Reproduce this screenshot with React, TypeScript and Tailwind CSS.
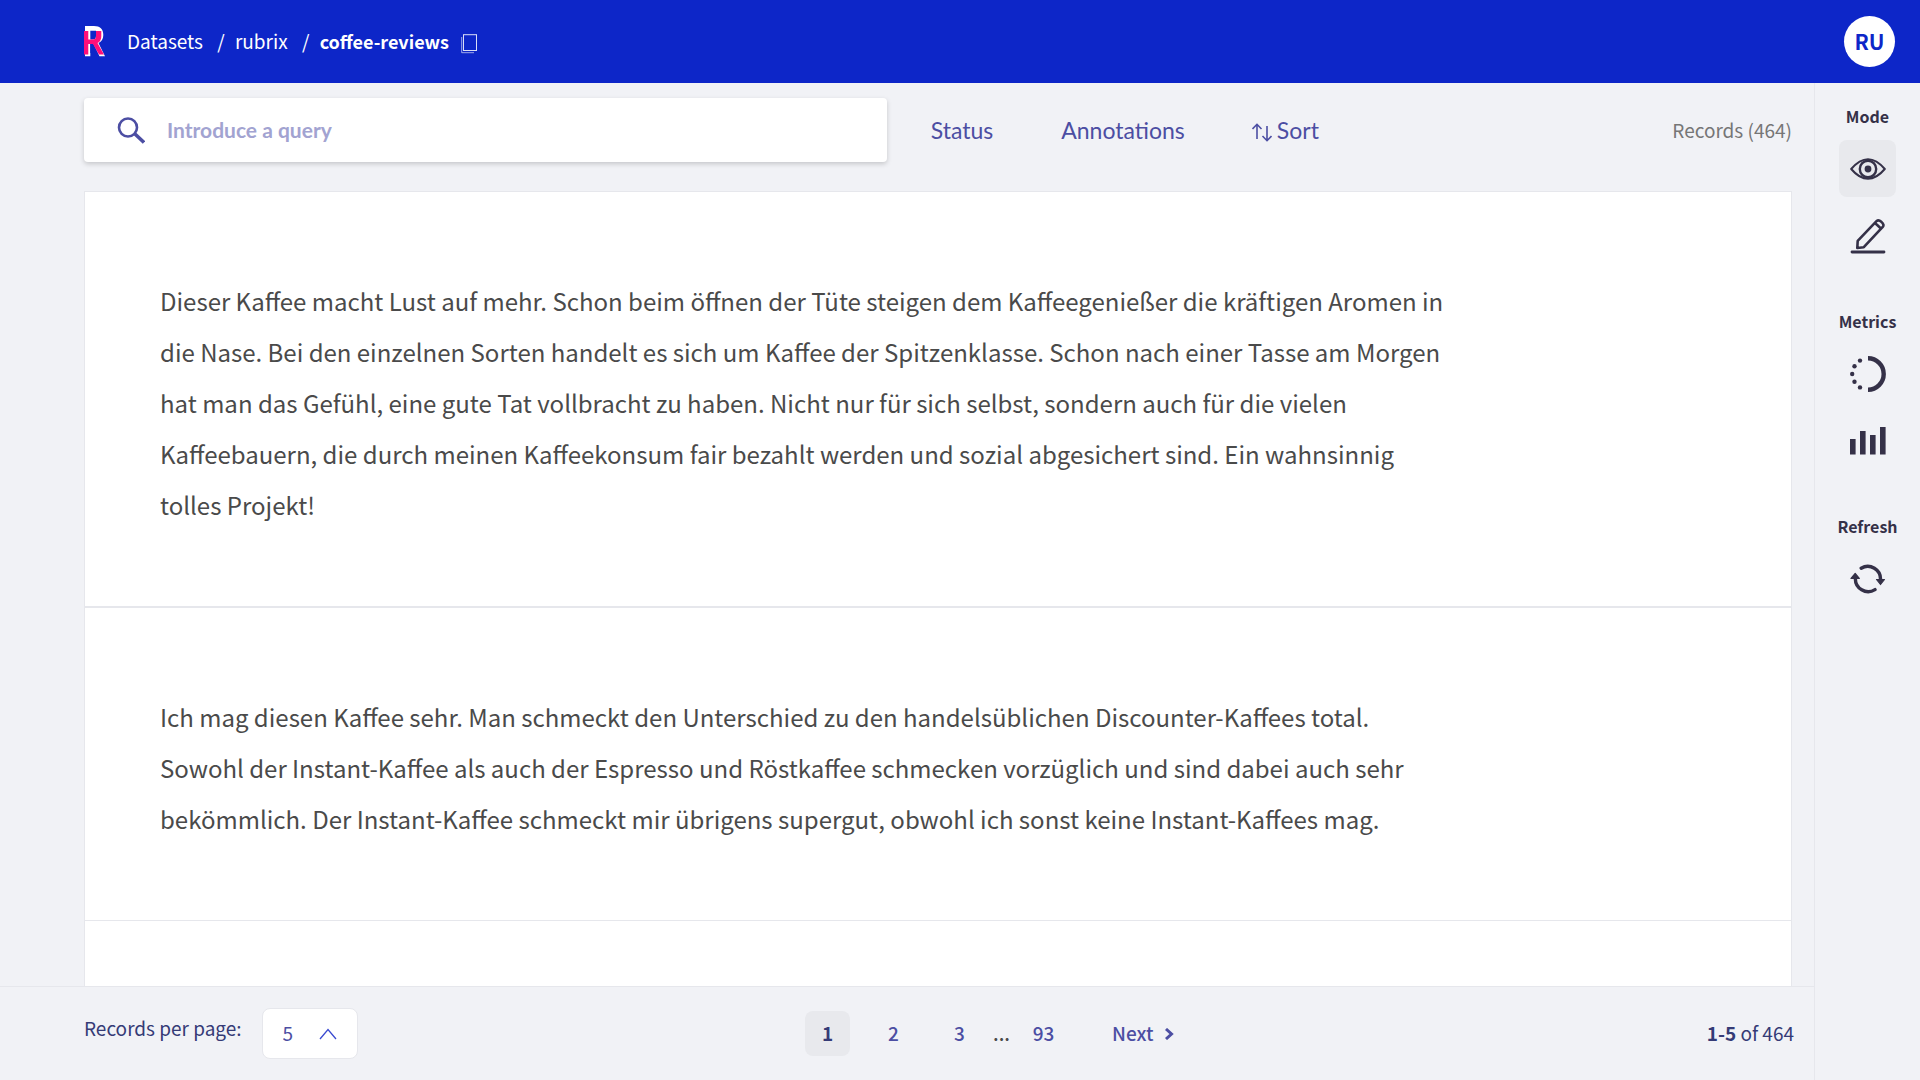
import { useState } from "react";
import type { ReactNode } from "react";

const records = [
  "Dieser Kaffee macht Lust auf mehr. Schon beim öffnen der Tüte steigen dem Kaffeegenießer die kräftigen Aromen in die Nase. Bei den einzelnen Sorten handelt es sich um Kaffee der Spitzenklasse. Schon nach einer Tasse am Morgen hat man das Gefühl, eine gute Tat vollbracht zu haben. Nicht nur für sich selbst, sondern auch für die vielen Kaffeebauern, die durch meinen Kaffeekonsum fair bezahlt werden und sozial abgesichert sind. Ein wahnsinnig tolles Projekt!",
  "Ich mag diesen Kaffee sehr. Man schmeckt den Unterschied zu den handelsüblichen Discounter-Kaffees total. Sowohl der Instant-Kaffee als auch der Espresso und Röstkaffee schmecken vorzüglich und sind dabei auch sehr bekömmlich. Der Instant-Kaffee schmeckt mir übrigens supergut, obwohl ich sonst keine Instant-Kaffees mag.",
];

function Logo() {
  return (
    <svg width="22" height="31" viewBox="0 0 22 31" fill="none" aria-hidden="true">
      <path d="M1 0H10C16 0 19.300 3 19.300 9C19.300 13 17.500 15.500 14.500 17L21 30.300H15.500L9.500 18H6.300V30.300H1Z" fill="#fff" />
      <path d="M6.300 4.700H12V10C12 12.500 11 13.500 8.500 13.500H6.300Z" fill="#0d26c8" />
      <path d="M9 18L13.500 27H6.300V18Z" fill="#0d26c8" />
      <path d="M0 5H4.300V13.500H8.500C11 13.500 12 12.500 12 10V5H17.300V10.500C17.300 13.500 16 15.800 13.500 17L20 28.500H15L9 18H4.300V28.500H0Z" fill="#ff0f79" />
    </svg>
  );
}

function EyeIcon() {
  return (
    <svg width="36" height="22" viewBox="0 0 36 22" fill="none" stroke="#353148" strokeWidth="2" aria-hidden="true">
      <path d="M1.200 11Q9.500 1.200 18 1.200T34.800 11Q26.500 20.800 18 20.800T1.200 11Z" strokeLinejoin="round" />
      <circle cx="18" cy="11" r="8.200" strokeWidth="2.400" />
      <circle cx="18" cy="11" r="3.400" fill="#353148" stroke="none" />
    </svg>
  );
}

function PencilIcon() {
  return (
    <svg width="36" height="36" viewBox="0 0 36 36" fill="none" stroke="#353148" strokeWidth="2.600" aria-hidden="true">
      <path d="M7.300 30L7.700 22.800L26.500 3.200Q28.500 1.200 31 3.500Q35 6.800 32.500 9.200L13.800 29.200Z" strokeLinejoin="round" />
      <path d="M25 5L31.500 11" />
      <path d="M2 34H34" strokeWidth="2.800" strokeLinecap="round" />
    </svg>
  );
}

function ProgressIcon() {
  return (
    <svg width="36" height="36" viewBox="0 0 36 36" fill="none" aria-hidden="true">
      <path d="M18 2.300A15.700 15.700 0 0 1 18 33.700" stroke="#353148" strokeWidth="4.400" />
      <g fill="#353148">
        <circle cx="10" cy="4.600" r="2.200" />
        <circle cx="4.500" cy="10.200" r="2.200" />
        <circle cx="2.200" cy="18" r="2.200" />
        <circle cx="4.500" cy="25.800" r="2.200" />
        <circle cx="10" cy="31.400" r="2.200" />
      </g>
    </svg>
  );
}

function BarsIcon() {
  return (
    <svg width="36" height="28" viewBox="0 0 36 28" fill="#353148" aria-hidden="true">
      <rect x="0" y="12" width="5.600" height="15.500" />
      <rect x="10" y="4" width="5.600" height="23.500" />
      <rect x="20" y="8" width="5.600" height="19.500" />
      <rect x="30" y="0" width="5.600" height="27.500" />
    </svg>
  );
}

function RefreshIcon() {
  return (
    <svg width="36" height="30" viewBox="0 0 36 30" fill="none" stroke="#353148" strokeWidth="3.400" strokeLinecap="round" aria-hidden="true">
      <path d="M11.200 4.200A12.800 12.800 0 0 1 30.500 16" />
      <path d="M25 25.600A12.800 12.800 0 0 1 5.400 14" />
      <path d="M26.500 15.500H34.500L30.500 20.500Z" fill="#353148" strokeWidth="1.200" strokeLinejoin="round" />
      <path d="M1 14.500H9.300L5.200 9.500Z" fill="#353148" strokeWidth="1.200" strokeLinejoin="round" />
    </svg>
  );
}

function SideGroup({ title, children }: { title: string; children: ReactNode }) {
  return (
    <section className="flex flex-col items-center">
      <h2 className="mb-[13px] text-[16px] leading-[22px] font-bold text-[#353148]">{title}</h2>
      <div className="flex flex-col gap-[10px]">{children}</div>
    </section>
  );
}

function SideButton({ label, active, onClick, children }: { label: string; active?: boolean; onClick?: () => void; children: ReactNode }) {
  return (
    <button
      type="button"
      aria-label={label}
      onClick={onClick}
      className={`flex size-[57px] items-center justify-center rounded-lg ${active ? "bg-[#e8e9ed]" : ""}`}
    >
      {children}
    </button>
  );
}

export default function App() {
  const [mode, setMode] = useState("explore");
  const [page, setPage] = useState(1);

  const pageButton = (n: number) => (
    <button
      key={n}
      type="button"
      onClick={() => setPage(n)}
      className={`h-[45px] min-w-[45px] rounded-lg pb-[2px] ${page === n ? "bg-[#e8e9ed] font-bold text-[#353b76]" : "font-medium text-[#4c4ea3]"}`}
    >
      {n}
    </button>
  );

  return (
    <div className="flex h-screen flex-col overflow-hidden bg-[#f1f2f6] font-['Noto_Sans_CJK_SC',sans-serif] text-[19px] leading-6">
      <header className="flex h-[83px] shrink-0 items-center bg-[#0d26c8] pr-[25px] pl-[84px] text-white">
        <a href="#home" aria-label="Home">
          <Logo />
        </a>
        <nav aria-label="Breadcrumb" className="ml-[21px] flex items-center pb-[2px]">
          <a href="#datasets">Datasets</a>
          <span className="mr-[10px] ml-[14px] w-2 text-center">/</span>
          <a href="#rubrix">rubrix</a>
          <span className="mr-[10px] ml-[14px] w-2 text-center">/</span>
          <a href="#coffee-reviews" className="text-[18px] font-bold">coffee-reviews</a>
        </nav>
        <button type="button" aria-label="Copy name" className="ml-3 pt-1">
          <svg width="17" height="20" viewBox="0 0 17 20" fill="none" stroke="#fff" aria-hidden="true">
            <rect x="2.500" y="0.700" width="13" height="15.800" strokeOpacity="0.850" />
            <path d="M0.700 3V18.700H13" strokeOpacity="0.600" />
          </svg>
        </button>
        <button type="button" className="ml-auto size-[51px] rounded-full bg-white pb-[2px] text-[21px] font-bold text-[#0d26c8]">RU</button>
      </header>

      <div className="flex min-h-0 flex-1">
        <div className="flex min-w-0 flex-1 flex-col">
          <main className="flex min-h-0 flex-1 flex-col pr-[22px] pl-[84px]">
            <div className="mt-[15px] mb-[29px] flex h-16 shrink-0 items-center font-[Lato,sans-serif] text-[23px] text-[#4c4ea3]">
              <label className="flex h-16 w-[47%] items-center rounded bg-white pl-[33px] shadow-[0_2px_5px_rgba(0,0,0,0.18)]">
                <svg width="28" height="27" viewBox="0 0 28 27" fill="none" stroke="#4c4ea3" strokeWidth="2.600" aria-hidden="true">
                  <circle cx="11" cy="10.500" r="9" />
                  <path d="M17.500 16.500L27 25.500" strokeWidth="3.600" />
                </svg>
                <input
                  type="text"
                  aria-label="Query"
                  placeholder="Introduce a query"
                  className="ml-[22px] min-w-0 flex-1 text-[21px] font-bold outline-none placeholder:text-[#a2a3d1]"
                />
              </label>
              <button type="button" className="ml-11">Status</button>
              <button type="button" className="ml-[68px]">Annotations</button>
              <button type="button" className="ml-[67px] flex items-center gap-[5px]">
                <svg width="20" height="19" viewBox="0 0 20 19" className="mt-1" fill="none" stroke="#4c4ea3" strokeWidth="1.600" aria-hidden="true">
                  <path d="M5 16V1.500M0.500 6L5 1.300L9.500 6" />
                  <path d="M15 3V17.500M10.500 13L15 17.700L19.500 13" />
                </svg>
                Sort
              </button>
              <p className="ml-auto font-['Noto_Sans_CJK_SC',sans-serif] text-[19px] text-[#767676]">Records (464)</p>
            </div>

            <ul className="min-h-0 flex-1 overflow-hidden border-x border-t border-[#e6e7ec] bg-white">
              {records.map((text) => (
                <li key={text.slice(0, 12)} className="border-b border-[#e6e7ec] px-[75px] pt-[83px] pb-[76px] first:border-b-2">
                  <p className="max-w-[1298px] text-[24px] leading-[51px] text-[#4a4a4a]">{text}</p>
                </li>
              ))}
            </ul>
          </main>

          <footer className="flex h-[94px] shrink-0 items-center border-t border-[#e6e7ec] pr-5 pl-[84px] text-[#353b76]">
            <div className="flex w-[721px] shrink items-center">
              <label htmlFor="page-size" className="mb-3">Records per page:</label>
              <div className="relative ml-5">
                <select
                  id="page-size"
                  defaultValue="5"
                  className="h-[51px] w-24 appearance-none rounded-lg border border-[#e6e7ec] bg-white pb-[2px] pl-5 text-[#4c4ea3]"
                >
                  <option>5</option>
                  <option>10</option>
                  <option>20</option>
                </select>
                <svg width="18" height="12" viewBox="0 0 18 12" className="pointer-events-none absolute top-5 right-[21px]" fill="none" stroke="#3a4ad0" strokeWidth="1.300" aria-hidden="true">
                  <path d="M1 11L9 1.500L17 11" />
                </svg>
              </div>
            </div>
            <nav aria-label="Pagination" className="flex items-center">
              <div className="flex gap-[21px]">{[1, 2, 3].map(pageButton)}</div>
              <span className="mx-[11px] pb-[2px] font-medium text-[#4a4a4a]">...</span>
              {pageButton(93)}
              <button type="button" className="ml-[46px] flex items-center gap-3 font-medium text-[#4c4ea3]">
                <span className="pb-[2px]">Next</span>
                <svg width="9" height="12" viewBox="0 0 9 12" fill="none" stroke="#4c4ea3" strokeWidth="3" aria-hidden="true">
                  <path d="M1 1L6.500 6L1 11" />
                </svg>
              </button>
            </nav>
            <p className="ml-auto pb-[2px]">
              <strong className="font-bold">1-5</strong> of 464
            </p>
          </footer>
        </div>

        <aside className="flex w-[106px] shrink-0 flex-col gap-[46px] border-l border-[#e6e7ec] pt-[22px]">
          <SideGroup title="Mode">
            <SideButton label="Explore" active={mode === "explore"} onClick={() => setMode("explore")}>
              <EyeIcon />
            </SideButton>
            <SideButton label="Annotate" active={mode === "annotate"} onClick={() => setMode("annotate")}>
              <PencilIcon />
            </SideButton>
          </SideGroup>
          <SideGroup title="Metrics">
            <SideButton label="Progress">
              <ProgressIcon />
            </SideButton>
            <SideButton label="Stats">
              <BarsIcon />
            </SideButton>
          </SideGroup>
          <SideGroup title="Refresh">
            <SideButton label="Refresh">
              <RefreshIcon />
            </SideButton>
          </SideGroup>
        </aside>
      </div>
    </div>
  );
}
